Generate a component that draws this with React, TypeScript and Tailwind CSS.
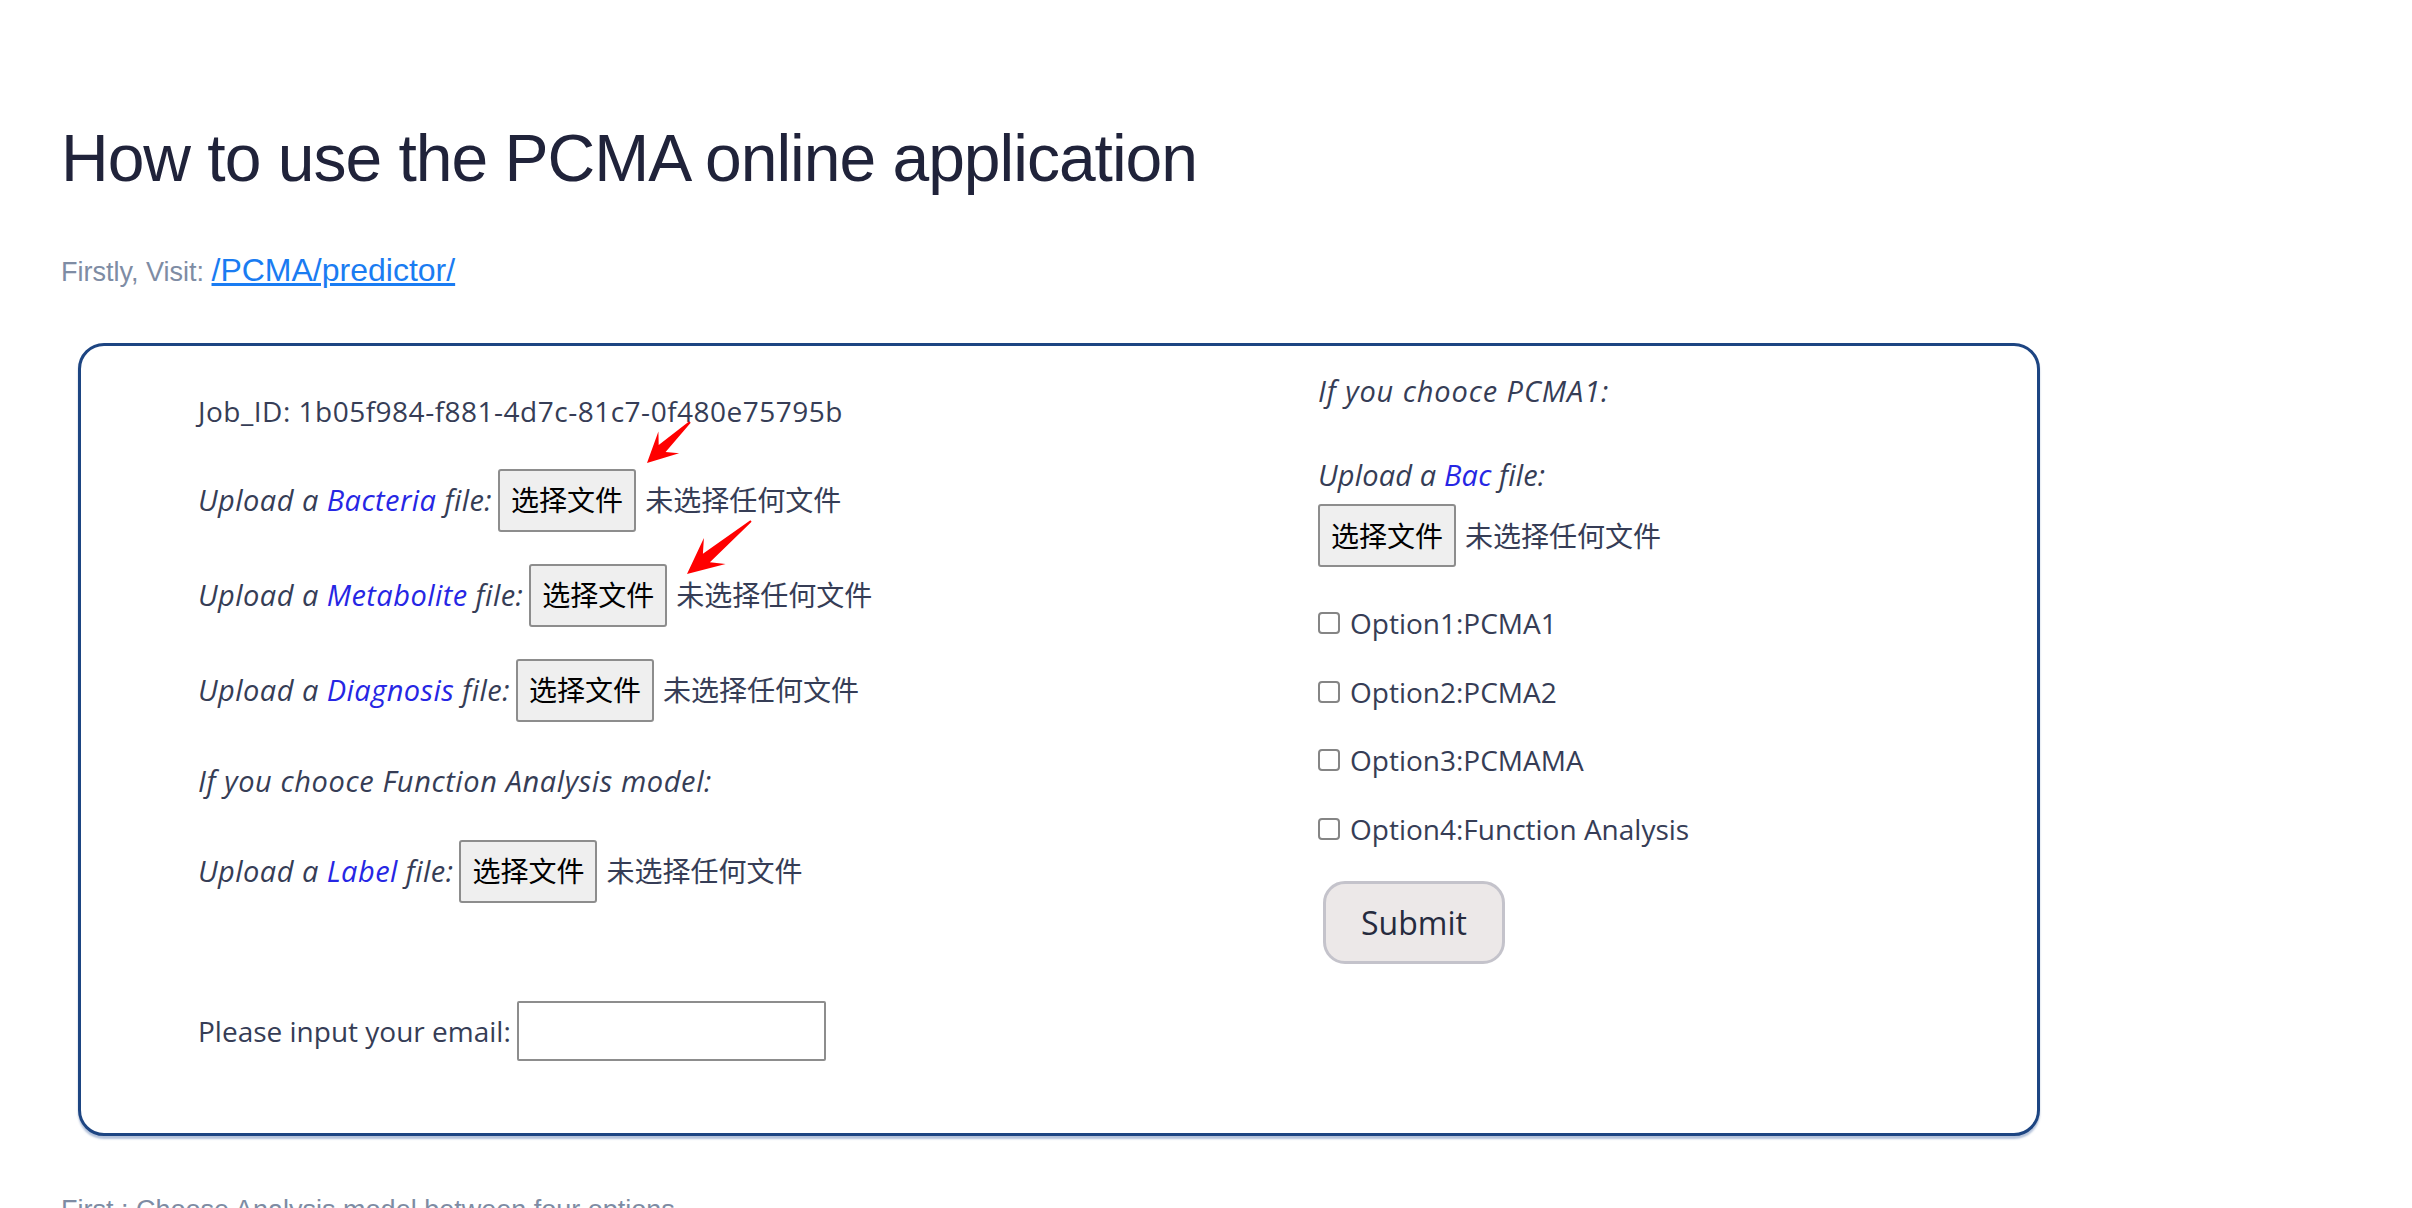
import React from "react";

const FONT = { fontFamily: "'Open Sans', 'Noto Sans CJK SC', sans-serif" };

type Pt = [number, number];

function arrowPoints(tail: Pt, tip: Pt, head: number, half: number, neck: number) {
  const dx = tip[0] - tail[0];
  const dy = tip[1] - tail[1];
  const len = Math.hypot(dx, dy);
  const ux = dx / len;
  const uy = dy / len;
  const px = -uy;
  const py = ux;
  const barb: Pt = [tip[0] - ux * head, tip[1] - uy * head];
  const nk: Pt = [tip[0] - ux * head * 0.7, tip[1] - uy * head * 0.7];
  const pts: Pt[] = [
    [tail[0] + px * 1, tail[1] + py * 1],
    [nk[0] + px * neck, nk[1] + py * neck],
    [barb[0] + px * half, barb[1] + py * half],
    tip,
    [barb[0] - px * half, barb[1] - py * half],
    [nk[0] - px * neck, nk[1] - py * neck],
    [tail[0] - px * 1, tail[1] - py * 1],
  ];
  return pts.map((p) => `${p[0].toFixed(1)},${p[1].toFixed(1)}`).join(" ");
}

function FilePick({ gap = true }: { gap?: boolean }) {
  return (
    <span className="flex items-center">
      <button
        className={`${gap ? "ml-[6px]" : ""} h-[63px] rounded-[3px] border-2 border-[#8d8d8d] bg-[#efefef] px-[11px] text-[28px] leading-none tracking-normal text-black`}
      >
        选择文件
      </button>
      <span className="ml-[9px] tracking-normal">未选择任何文件</span>
    </span>
  );
}

function UploadRow({ word, mt }: { word: string; mt: string }) {
  return (
    <div className={`flex h-[64px] items-center ${mt}`}>
      <span className="text-[29px] tracking-[0.45px] italic">
        Upload a <span className="text-[#2626e4]">{word}</span> file:
      </span>
      <FilePick />
    </div>
  );
}

function Option({ label, mt }: { label: string; mt: string }) {
  return (
    <label className={`flex h-[40px] items-center ${mt}`}>
      <input
        type="checkbox"
        className="h-[22px] w-[22px] appearance-none rounded-[4px] border-2 border-[#858585] bg-white"
      />
      <span className="ml-[10px]">{label}</span>
    </label>
  );
}

export default function App() {
  return (
    <div className="min-h-[1208px] bg-white px-[61px]">
      <h1
        className="pt-[125px] text-[66px] leading-none tracking-[-1px] text-[#20233a]"
        style={{ fontFamily: "'Liberation Sans', Arial, sans-serif" }}
      >
        How to use the PCMA online application
      </h1>

      <p
        className="mt-[61px] flex items-baseline text-[27px] leading-[36px] text-[#7e8ca4]"
        style={{ fontFamily: "'Liberation Sans', Arial, sans-serif" }}
      >
        Firstly, Visit:&nbsp;
        <a href="#" className="text-[32px] text-[#1a7cf2] underline">
          /PCMA/predictor/
        </a>
      </p>

      <div
        className="relative mt-[53px] ml-[17px] flex w-[1962px] rounded-[26px] border-[3px] border-[#1d4582] bg-white pl-[117px] text-[28px] text-[#363d56] shadow-[0_3px_2px_rgba(40,80,150,0.35)]"
        style={FONT}
      >
        <div className="flex w-[1120px] flex-col pt-[33px] pb-[70px]">
          <div className="flex h-[64px] items-center tracking-[0.5px]">
            Job_ID: 1b05f984-f881-4d7c-81c7-0f480e75795b
          </div>
          <UploadRow word="Bacteria" mt="mt-[25px]" />
          <UploadRow word="Metabolite" mt="mt-[31px]" />
          <UploadRow word="Diagnosis" mt="mt-[31px]" />
          <div className="mt-[27px] flex h-[64px] items-center text-[29px] tracking-[0.6px] italic">
            If you chooce Function Analysis model:
          </div>
          <UploadRow word="Label" mt="mt-[26px]" />
          <div className="mt-[96px] flex h-[64px] items-center">
            <span>Please input your email:</span>
            <input
              type="text"
              className="ml-[6px] h-[60px] w-[309px] rounded-[2px] border-2 border-[#8d8d8d] bg-white"
            />
          </div>
        </div>

        <div className="flex flex-col pt-[13px]">
          <div className="flex h-[64px] items-center text-[29px] tracking-[0.9px] italic">
            If you chooce PCMA1:
          </div>
          <div className="mt-[32px] flex h-[40px] items-center text-[29px] tracking-[0.15px] italic">
            <span>
              Upload a <span className="text-[#2626e4]">Bac</span> file:
            </span>
          </div>
          <div className="mt-[9px] flex h-[63px] items-center">
            <FilePick gap={false} />
          </div>
          <Option label="Option1:PCMA1" mt="mt-[36px]" />
          <Option label="Option2:PCMA2" mt="mt-[29px]" />
          <Option label="Option3:PCMAMA" mt="mt-[28px]" />
          <Option label="Option4:Function Analysis" mt="mt-[29px]" />
          <button className="mt-[32px] ml-[5px] h-[83px] w-[182px] rounded-[22px] border-[3px] border-[#c4c3cb] bg-[#ece8e8] text-[32px] text-[#262b3e]">
            Submit
          </button>
        </div>

        <svg
          className="pointer-events-none absolute top-[-3px] left-[-3px]"
          width="1962"
          height="793"
        >
          <polygon points={arrowPoints([612, 79], [569, 120], 30, 15, 5)} fill="#ff0000" />
          <polygon points={arrowPoints([673, 178], [609, 231], 36, 17, 5.5)} fill="#ff0000" />
        </svg>
      </div>

      <p
        className="mt-[56px] text-[27px] leading-[36px] text-[#7e8ca4]"
        style={{ fontFamily: "'Liberation Sans', Arial, sans-serif" }}
      >
        First : Choose Analysis model between four options
      </p>
    </div>
  );
}
